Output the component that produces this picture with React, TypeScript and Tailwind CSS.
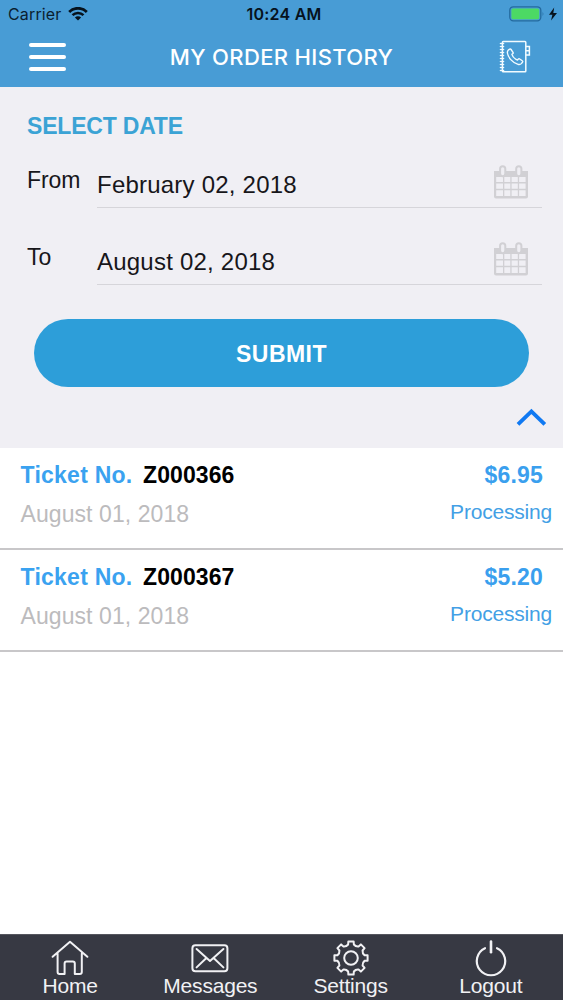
import type { ReactNode } from "react";

const tickets = [
  { no: "Z000366", date: "August 01, 2018", price: "$6.95", status: "Processing" },
  { no: "Z000367", date: "August 01, 2018", price: "$5.20", status: "Processing" },
];

function gearPath(cx: number, cy: number, outer: number, inner: number) {
  const at = (r: number, deg: number) => {
    const a = (deg * Math.PI) / 180;
    return `${(cx + r * Math.cos(a)).toFixed(2)} ${(cy + r * Math.sin(a)).toFixed(2)}`;
  };
  let d = "";
  for (let i = 0; i < 8; i++) {
    const c = i * 45;
    d += `${i === 0 ? "M" : "L"}${at(inner + 0.6, c - 12)}L${at(outer, c - 9)}L${at(outer, c + 9)}L${at(inner + 0.6, c + 12)}`;
    d += `Q${at(inner - 1, c + 22.5)} ${at(inner + 0.6, c + 33)}`;
  }
  return d + "Z";
}

function StatusBar() {
  return (
    <div className="grid h-7 grid-cols-3 items-center pl-2 pr-[5px] text-[#0b1f30]">
      <div className="flex items-center gap-[6px]">
        <span className="text-[16px] leading-7 tracking-[0.15px]">Carrier</span>
        <svg width="20" height="14" viewBox="0 0 20 14" fill="none" stroke="#06121c">
          <path d="M1.2 4.9a12.5 12.5 0 0 1 17.6 0" strokeWidth="2.8" />
          <path d="M4.5 8.2a7.8 7.8 0 0 1 11 0" strokeWidth="2.5" />
          <path d="M10 13.6 6.9 10.6a4.4 4.4 0 0 1 6.2 0z" fill="#06121c" stroke="none" />
        </svg>
      </div>
      <span className="whitespace-nowrap pl-[2px] text-center text-[16px] font-semibold leading-7 tracking-[0.25px] text-[#06121c]">
        10:24 AM
      </span>
      <div className="flex items-center justify-end gap-[3px]">
        <svg width="36" height="16" viewBox="0 0 36 16">
          <rect x="0.8" y="0.8" width="31" height="14" rx="3.5" fill="none" stroke="#246a9e" strokeWidth="1.3" />
          <rect x="2.4" y="2.4" width="27.8" height="10.8" rx="1.6" fill="#4cd964" />
          <path d="M33.6 5.4q1.6 2.4 0 4.8z" fill="#246a9e" />
        </svg>
        <svg width="10" height="14" viewBox="0 0 10 14">
          <path d="M6.2 0.5 1 7.7h3.4L3 13.5 9 5.9H5.3z" fill="#06121c" />
        </svg>
      </div>
    </div>
  );
}

function PhoneBook() {
  const rings = [3, 6, 9, 12, 15, 18, 21, 24, 27, 30];
  return (
    <svg width="32" height="34" viewBox="0 0 32 34" fill="none" stroke="#f2fbff" strokeWidth="1.5">
      <rect x="3.4" y="1.6" width="23.4" height="30.2" rx="0.8" />
      {rings.map((y) => (
        <path key={y} d={`M0.8 ${y + 0.5}h4.4`} strokeWidth="1.3" />
      ))}
      <path d="M26.8 6.4h3.6v8.6h-3.6M26.8 10.7h3.6" />
      <path
        d="M9.2 10.2l1.5-1q.8-.5 1.4.3l1.9 2.8q.5.8-.3 1.4l-.8.7q.8 2.8 3.6 4.6 1 .8 2 1l.8-.9q.7-.7 1.5-.1l2.4 1.7q.9.7.3 1.5l-1.2 1.4q-1.2 1.3-3.2.7-4.5-1.3-7.6-4.9-2.6-3.1-3.1-6.4-.2-1.8.8-2.8z"
        strokeWidth="1.4"
        strokeLinejoin="round"
      />
    </svg>
  );
}

function Header() {
  return (
    <header className="h-[87px] bg-[#489cd5] font-['Inter',sans-serif]">
      <StatusBar />
      <div className="grid h-[58px] grid-cols-[80px_1fr_80px] items-center">
        <div className="flex flex-col gap-2 pl-[29px]">
          <span className="h-1 w-[37px] rounded-full bg-white" />
          <span className="h-1 w-[37px] rounded-full bg-white" />
          <span className="h-1 w-[37px] rounded-full bg-white" />
        </div>
        <h1 className="whitespace-nowrap text-center text-[22px] font-medium tracking-[0.35px] text-white">
          MY ORDER HISTORY
        </h1>
        <div className="flex justify-end pr-[32px]">
          <PhoneBook />
        </div>
      </div>
    </header>
  );
}

function CalendarIcon() {
  return (
    <svg width="36" height="36" viewBox="0 0 36 36">
      <path d="M1 7h34v25.5a2 2 0 0 1-2 2H3a2 2 0 0 1-2-2z" fill="#d1d0d4" />
      <path
        d="M3.2 13h6.8v5H3.2zM11.3 13h6v5h-6zM18.6 13h6.2v5h-6.2zM26.1 13h6.5v5h-6.5zM3.2 19.4h6.8v5.4H3.2zM11.3 19.4h6v5.4h-6zM18.6 19.4h6.2v5.4h-6.2zM26.1 19.4h6.5v5.4h-6.5zM3.2 26.2h6.8v5.8H3.2zM11.3 26.2h6v5.8h-6zM18.6 26.2h6.2v5.8h-6.2zM26.1 26.2h6.5v5.8h-6.5z"
        fill="#f0eff4"
      />
      <rect x="7.1" y="2.2" width="5.2" height="10" rx="2.6" fill="#efeef3" stroke="#d1d0d4" strokeWidth="2" />
      <rect x="23.2" y="2.2" width="5.2" height="10" rx="2.6" fill="#efeef3" stroke="#d1d0d4" strokeWidth="2" />
    </svg>
  );
}

function DateField({ label, value }: { label: string; value: string }) {
  return (
    <div className="flex items-start pl-[27px] pr-[21px] text-[#17161a]">
      <span className="w-[70px] text-[23px] leading-[28px] tracking-[-0.1px]">{label}</span>
      <div className="flex h-[42px] flex-1 items-start justify-between border-b border-[#d6d5da] pr-[13px]">
        <span className="whitespace-nowrap pt-[5px] text-[24px] leading-[28px] tracking-[0.22px]">{value}</span>
        <div className="-mt-[2px]">
          <CalendarIcon />
        </div>
      </div>
    </div>
  );
}

function NavItem({ label, children }: { label: string; children: ReactNode }) {
  return (
    <div className="flex flex-col items-center pt-[4px]">
      <svg width="40" height="38" viewBox="0 0 40 38" fill="none" stroke="#f1f1f4" strokeWidth="2" strokeLinejoin="round" strokeLinecap="round">
        {children}
      </svg>
      <span className="-mt-[2px] text-[21px] leading-[22px] tracking-[-0.2px] text-[#f1f1f4]">{label}</span>
    </div>
  );
}

export default function App() {
  return (
    <div className="flex h-[1000px] w-[563px] flex-col overflow-hidden bg-white font-['Liberation_Sans',Arial,sans-serif]">
      <Header />
      <section className="h-[361px] bg-[#f0eff4]">
        <h2 className="pl-[27px] pt-[25px] text-[23px] font-bold leading-[28px] tracking-[-0.2px] text-[#3ba3d5]">
          SELECT DATE
        </h2>
        <div className="flex flex-col gap-[35px] pt-[26px]">
          <DateField label="From" value="February 02, 2018" />
          <DateField label="To" value="August 02, 2018" />
        </div>
        <div className="px-[34px] pt-[34px]">
          <button className="flex h-[68px] w-full items-center justify-center rounded-full bg-[#2d9ed9] pt-[2px] text-[23px] font-bold tracking-[0.45px] text-white">
            SUBMIT
          </button>
        </div>
        <div className="flex justify-end pr-[16px] pt-[20px]">
          <svg width="32" height="20" viewBox="0 0 32 20" fill="none">
            <path d="M3 17.3 16.4 4.4 29.8 17.3" stroke="#1079f2" strokeWidth="3.9" />
          </svg>
        </div>
      </section>
      <ul className="flex-1">
        {tickets.map((t) => (
          <li key={t.no} className="flex h-[102px] justify-between border-b-2 border-[#c8c7c9] pl-[20.5px] pr-[11px]">
            <div className="pt-[12px]">
              <div className="flex gap-[10.5px] whitespace-nowrap text-[23px] font-bold leading-[30px]">
                <span className="tracking-[0.25px] text-[#3aa2f0]">Ticket No.</span>
                <span className="tracking-[0.1px] text-black">{t.no}</span>
              </div>
              <div className="pt-[9px] text-[23px] leading-[30px] tracking-[0.08px] text-[#bcbbbd]">{t.date}</div>
            </div>
            <div className="flex flex-col items-end pt-[12px]">
              <span className="pr-[9px] text-[23px] font-bold leading-[30px] tracking-[0.2px] text-[#3a9fee]">{t.price}</span>
              <span className="pt-[7px] text-[21px] leading-[30px] tracking-[-0.2px] text-[#439fe5]">{t.status}</span>
            </div>
          </li>
        ))}
      </ul>
      <nav className="grid h-[66px] grid-cols-4 border-t border-[#55565e] bg-[#373943] pr-[2px]">
        <NavItem label="Home">
          <path d="M2.6 17.8 20 2.8 37.4 17.8M7.6 14.6V33q0 2 2 2h5V24.6q0-2 2-2h6.2q2 0 2 2V35h5q2 0 2-2V14.6" />
        </NavItem>
        <NavItem label="Messages">
          <rect x="2.4" y="6.2" width="35" height="26" rx="3" />
          <path d="M6.6 10 20 22 33.4 10M6.6 28.4l9.8-9.4M33.4 28.4l-9.8-9.4" />
        </NavItem>
        <NavItem label="Settings">
          <path d={gearPath(20, 19, 16.8, 13.2)} />
          <circle cx="20" cy="19" r="6.8" />
        </NavItem>
        <NavItem label="Logout">
          <path d="M20 2.6v10.6" strokeWidth="2.6" />
          <path d="M14 9.2a14.2 14.2 0 1 0 12 0" strokeWidth="2.2" />
        </NavItem>
      </nav>
    </div>
  );
}
